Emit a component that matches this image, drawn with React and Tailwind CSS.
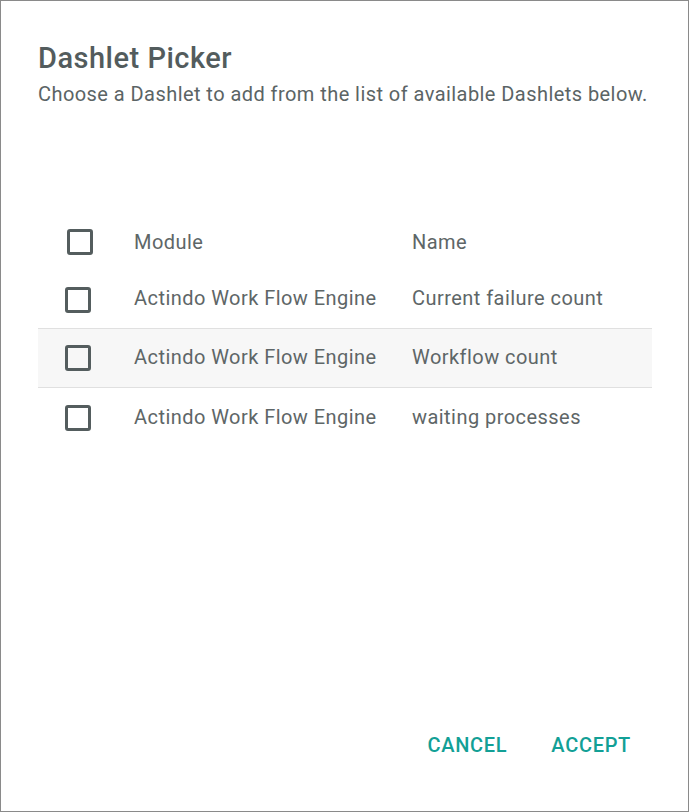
import React from "react";

function Box({ className = "" }) {
  return (
    <div
      className={`h-[26px] w-[26px] rounded-[3px] border-[3px] border-[#545d5e] bg-transparent ${className}`}
    />
  );
}

const rows = [
  { module: "Actindo Work Flow Engine", name: "Current failure count", h: "h-[57px]", cls: "" },
  {
    module: "Actindo Work Flow Engine",
    name: "Workflow count",
    h: "h-[60px]",
    cls: "bg-[#f7f7f7] border-y border-[#e0e0e0]",
  },
  { module: "Actindo Work Flow Engine", name: "waiting processes", h: "h-[60px]", cls: "" },
];

export default function App() {
  return (
    <div
      className="flex h-[812px] w-[689px] flex-col border border-[#8a8a8a] bg-white"
      style={{ fontFamily: "Roboto, 'Liberation Sans', sans-serif" }}
    >
      <div className="pl-[37px] pr-[36px] pt-[40px]">
        <h1 className="text-[29px] font-medium leading-[34px] tracking-[0.5px] text-[#535c5d]">
          Dashlet Picker
        </h1>
        <p className="mt-[5px] text-[20px] leading-[28px] tracking-[0.44px] text-[#5b6465]">
          Choose a Dashlet to add from the list of available Dashlets below.
        </p>

        <div className="mt-[105px] text-[20px] tracking-[0.45px] text-[#5e6667]">
          <div className="flex h-[58px] items-center">
            <div className="w-[96px] pl-[29px]">
              <Box />
            </div>
            <div className="w-[278px]">Module</div>
            <div>Name</div>
          </div>
          {rows.map((r, i) => (
            <div key={i} className={`flex items-center ${r.h} ${r.cls}`}>
              <div className="w-[96px] pl-[27px]">
                <Box />
              </div>
              <div className="w-[278px] -mt-[3px]">{r.module}</div>
              <div className="-mt-[3px]">{r.name}</div>
            </div>
          ))}
        </div>
      </div>

      <div className="flex-1" />

      <div className="flex justify-end gap-[12px] pb-[52px] pr-[41px]">
        <button className="px-4 text-[20px] font-medium leading-[28px] tracking-[0.7px] text-[#12a096]">
          CANCEL
        </button>
        <button className="px-4 text-[20px] font-medium leading-[28px] tracking-[0.7px] text-[#12a096]">
          ACCEPT
        </button>
      </div>
    </div>
  );
}
